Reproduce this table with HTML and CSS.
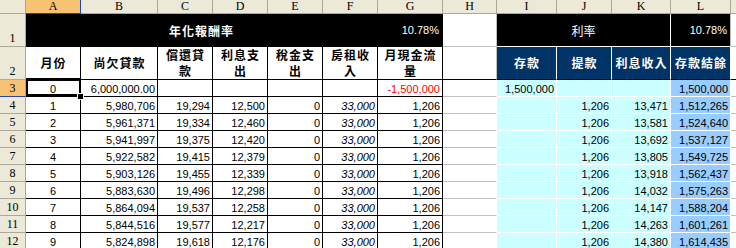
FILE: index.html
```html
<!DOCTYPE html>
<html lang="zh-Hant">
<head>
<meta charset="utf-8">
<title>年化報酬率</title>
<link rel="stylesheet" href="styles.css">
</head>
<body>
<div class="sheet">
  <div class="ch corner"></div><div class="ch on">A</div><div class="ch">B</div><div class="ch">C</div><div class="ch">D</div><div class="ch">E</div><div class="ch">F</div><div class="ch">G</div><div class="ch">H</div><div class="ch">I</div><div class="ch">J</div><div class="ch">K</div><div class="ch">L</div><div class="ch"></div>

  <div class="rh">1</div><div class="blk span6 bold">年化報酬率</div><div class="blk r">10.78%</div><div class="g"></div><div class="blk2 span3">利率</div><div class="blk2 r last">10.78%</div><div class="g"></div>

  <div class="rh">2</div>
  <div class="th">月份</div><div class="th">尚欠貸款</div><div class="th">償還貸款</div><div class="th">利息支出</div><div class="th">稅金支出</div><div class="th">房租收入</div><div class="th">月現金流量</div>
  <div class="g bb"></div>
  <div class="bh">存款</div><div class="bh">提款</div><div class="bh">利息收入</div><div class="bh">存款結餘</div>
  <div class="g bb"></div>

  <div class="rh on">3</div><div class="d m sel">0<span class="handle"></span></div><div class="d">6,000,000.00</div><div class="d"></div><div class="d"></div><div class="d"></div><div class="d"></div><div class="d red">-1,500,000</div><div class="h"></div><div class="cy">1,500,000</div><div class="cy"></div><div class="cy"></div><div class="lb">1,500,000</div><div class="g"></div>

  <div class="rh">4</div><div class="d m">1</div><div class="d">5,980,706</div><div class="d">19,294</div><div class="d">12,500</div><div class="d">0</div><div class="d it">33,000</div><div class="d">1,206</div><div class="h"></div><div class="cy"></div><div class="cy">1,206</div><div class="cy">13,471</div><div class="lb">1,512,265</div><div class="g"></div>

  <div class="rh">5</div><div class="d m">2</div><div class="d">5,961,371</div><div class="d">19,334</div><div class="d">12,460</div><div class="d">0</div><div class="d it">33,000</div><div class="d">1,206</div><div class="h"></div><div class="cy"></div><div class="cy">1,206</div><div class="cy">13,581</div><div class="lb">1,524,640</div><div class="g"></div>

  <div class="rh">6</div><div class="d m">3</div><div class="d">5,941,997</div><div class="d">19,375</div><div class="d">12,420</div><div class="d">0</div><div class="d it">33,000</div><div class="d">1,206</div><div class="h"></div><div class="cy"></div><div class="cy">1,206</div><div class="cy">13,692</div><div class="lb">1,537,127</div><div class="g"></div>

  <div class="rh">7</div><div class="d m">4</div><div class="d">5,922,582</div><div class="d">19,415</div><div class="d">12,379</div><div class="d">0</div><div class="d it">33,000</div><div class="d">1,206</div><div class="h"></div><div class="cy"></div><div class="cy">1,206</div><div class="cy">13,805</div><div class="lb">1,549,725</div><div class="g"></div>

  <div class="rh">8</div><div class="d m">5</div><div class="d">5,903,126</div><div class="d">19,455</div><div class="d">12,339</div><div class="d">0</div><div class="d it">33,000</div><div class="d">1,206</div><div class="h"></div><div class="cy"></div><div class="cy">1,206</div><div class="cy">13,918</div><div class="lb">1,562,437</div><div class="g"></div>

  <div class="rh">9</div><div class="d m">6</div><div class="d">5,883,630</div><div class="d">19,496</div><div class="d">12,298</div><div class="d">0</div><div class="d it">33,000</div><div class="d">1,206</div><div class="h"></div><div class="cy"></div><div class="cy">1,206</div><div class="cy">14,032</div><div class="lb">1,575,263</div><div class="g"></div>

  <div class="rh">10</div><div class="d m">7</div><div class="d">5,864,094</div><div class="d">19,537</div><div class="d">12,258</div><div class="d">0</div><div class="d it">33,000</div><div class="d">1,206</div><div class="h"></div><div class="cy"></div><div class="cy">1,206</div><div class="cy">14,147</div><div class="lb">1,588,204</div><div class="g"></div>

  <div class="rh">11</div><div class="d m">8</div><div class="d">5,844,516</div><div class="d">19,577</div><div class="d">12,217</div><div class="d">0</div><div class="d it">33,000</div><div class="d">1,206</div><div class="h"></div><div class="cy"></div><div class="cy">1,206</div><div class="cy">14,263</div><div class="lb">1,601,261</div><div class="g"></div>

  <div class="rh">12</div><div class="d m">9</div><div class="d">5,824,898</div><div class="d">19,618</div><div class="d">12,176</div><div class="d">0</div><div class="d it">33,000</div><div class="d">1,206</div><div class="h"></div><div class="cy"></div><div class="cy">1,206</div><div class="cy">14,380</div><div class="lb">1,614,435</div><div class="g"></div>
</div>
</body>
</html>
```

FILE: styles.css
```css
html, body {
  margin: 0;
  padding: 0;
  background: #ffffff;
  overflow: hidden;
}

.sheet {
  display: grid;
  grid-template-columns: 26px 55px 77px 55px 55px 55px 55px 65px 54px 60px 55px 59px 60px 40px;
  grid-template-rows: 14px 33px 33px repeat(10, 17px);
  font-family: "Liberation Sans", "Noto Sans CJK TC", sans-serif;
  font-size: 11px;
  color: #000000;
}

.sheet > div {
  box-sizing: border-box;
  border-right: 1px solid #c0c0c0;
  border-bottom: 1px solid #c0c0c0;
  overflow: hidden;
  white-space: nowrap;
  min-width: 0;
}

/* column headers */
.sheet > .ch {
  background: #ece9d8;
  border-right-color: #aca899;
  border-bottom-color: #aca899;
  font-family: "Liberation Serif", serif;
  font-size: 12px;
  line-height: 13px;
  text-align: center;
}
.sheet > .ch.on {
  background: #f7c274;
  border-right-color: #27459b;
  border-bottom-color: #27459b;
}

/* row headers */
.sheet > .rh {
  background: #ece9d8;
  border-right-color: #aca899;
  border-bottom-color: #aca899;
  font-family: "Liberation Serif", serif;
  font-size: 12px;
  line-height: 15px;
  display: flex;
  align-items: flex-end;
  justify-content: center;
}
.sheet > .rh.on {
  background: #f7c274;
  border-bottom-color: #27459b;
}

/* row 1 black title band */
.sheet > .blk,
.sheet > .blk2 {
  background: #000000;
  color: #ffffff;
  display: flex;
  align-items: center;
  justify-content: center;
  font-size: 12px;
  padding: 0 3px;
}
.sheet > .blk {
  border-right-color: #000000;
  border-bottom-color: #000000;
}
.sheet > .blk2 {
  border-right-color: #ffffff;
  border-bottom-color: #ffffff;
  font-family: "Noto Sans CJK TC", "Liberation Sans", sans-serif;
}
.sheet > .blk.r,
.sheet > .blk2.r {
  justify-content: flex-end;
  font-family: "Liberation Sans", sans-serif;
  font-size: 11px;
}
.sheet > .blk2.last {
  border-right-color: #c0c0c0;
}
.span6 { grid-column: span 6; }
.span3 { grid-column: span 3; }
.bold {
  font-family: "Noto Sans CJK TC", sans-serif;
  font-weight: 700;
  letter-spacing: 1px;
}

/* row 2 headers */
.sheet > .th,
.sheet > .bh {
  display: flex;
  align-items: center;
  justify-content: center;
  text-align: center;
  white-space: normal;
  font-family: "Noto Sans CJK TC", sans-serif;
  font-weight: 700;
  font-size: 12px;
  letter-spacing: 1px;
  line-height: 16px;
  padding: 0 2px 0 3px;
  border-bottom-color: #000000;
}
.sheet > .th {
  background: #ffffff;
  border-right-color: #000000;
}
.sheet > .bh {
  background: #003366;
  color: #ffffff;
  border-right-color: #ffffff;
}
.sheet > .bb {
  border-bottom-color: #000000;
}

/* data cells */
.sheet > .d,
.sheet > .cy,
.sheet > .lb {
  text-align: right;
  line-height: 16px;
  padding: 1px 2px 0 2px;
}
.sheet > .d {
  border-right-color: #000000;
  border-bottom-color: #000000;
}
.sheet > .d.m {
  text-align: center;
}
.sheet > .d.red {
  color: #ff0000;
}
.sheet > .d.it {
  font-style: italic;
}
.sheet > .h {
  border-right-color: #ffffff;
}
.sheet > .cy {
  background: #ccffff;
  border-right-color: #ffffff;
  border-bottom-color: #ffffff;
}
.sheet > .lb {
  background: #99ccff;
  border-right-color: #ffffff;
  border-bottom-color: #ffffff;
}

/* selected cell */
.sheet > .sel {
  position: relative;
  overflow: visible;
}
.sheet > .sel::after {
  content: "";
  position: absolute;
  top: -2px;
  left: 0;
  right: -1px;
  bottom: 0;
  border-style: solid;
  border-color: #000000;
  border-width: 3px 2px 2px 2px;
  pointer-events: none;
}
.handle {
  position: absolute;
  left: 51px;
  top: 13px;
  width: 5px;
  height: 5px;
  background: #000000;
  border: 1px solid #ffffff;
  z-index: 2;
}
```
